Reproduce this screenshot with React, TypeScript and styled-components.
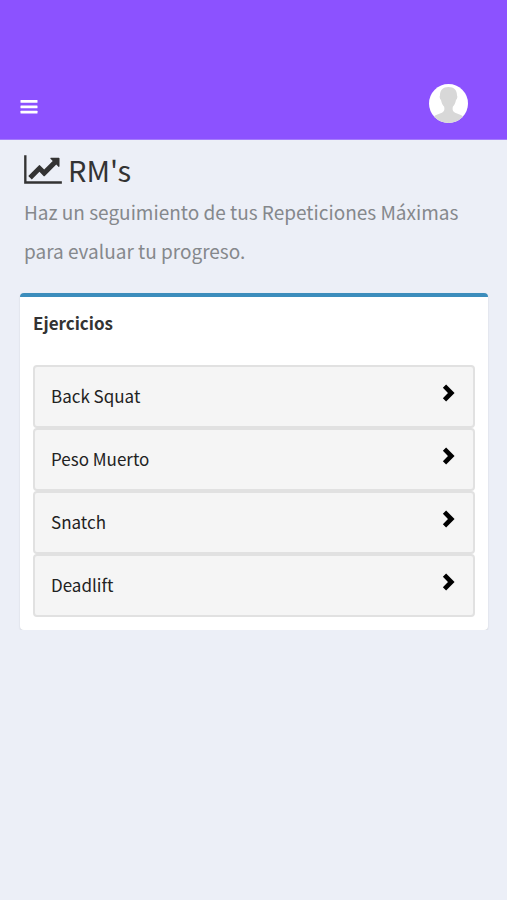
import React from "react";
import styled, { createGlobalStyle } from "styled-components";

const GlobalStyle = createGlobalStyle`
  * { box-sizing: border-box; }
  body {
    margin: 0;
    background: #eceff7;
    color: #333;
    font-family: "Noto Sans CJK SC", "Open Sans", sans-serif;
    font-size: 17px;
  }
`;

const Header = styled.header`
  display: flex;
  align-items: flex-end;
  justify-content: space-between;
  height: 140px;
  padding: 0 39px 16px 20px;
  background: #8c52ff;
  border-bottom: 1px solid #a57cfb;
`;

const IconButton = styled.button`
  display: flex;
  padding: 0;
  border: 0;
  background: none;
  cursor: pointer;
`;

const MenuButton = styled(IconButton)`
  padding-bottom: 9px;
`;

const AvatarButton = styled(IconButton)`
  border-radius: 50%;
`;

const Intro = styled.section`
  padding: 11px 24px 0;
`;

const Title = styled.h1`
  display: flex;
  align-items: center;
  gap: 6px;
  margin: 0;
  font-size: 29px;
  font-weight: 400;
  line-height: 36px;
`;

const Lead = styled.p`
  margin: 5px 0 0;
  color: #85888c;
  font-size: 19px;
  line-height: 39px;
`;

const Panel = styled.section`
  margin: 23px 19px 0 20px;
  padding: 13px 13px 13px;
  background: #fff;
  border-top: 4px solid #3c8dbc;
  border-radius: 4px;
  box-shadow: 0 1px 2px rgba(0, 0, 0, 0.12);
`;

const PanelTitle = styled.h2`
  margin: 0 0 29px;
  font-size: 17px;
  font-weight: 700;
  line-height: 26px;
`;

const List = styled.ul`
  margin: 0;
  padding: 0;
  list-style: none;
`;

const ExerciseButton = styled.button`
  display: flex;
  align-items: center;
  justify-content: space-between;
  width: 100%;
  height: 63px;
  padding: 0 18px 2px 16px;
  background: #f5f5f5;
  border: 2px solid #e1e1e1;
  border-radius: 4px;
  color: #222;
  font: inherit;
  text-align: left;
  cursor: pointer;
`;

const Chevron = styled.svg`
  margin-bottom: 6px;
`;

const exercises = ["Back Squat", "Peso Muerto", "Snatch", "Deadlift"];

export default function App() {
  return (
    <>
      <GlobalStyle />
      <Header>
        <MenuButton type="button" aria-label="Menú">
          <svg width="18" height="15" viewBox="0 0 18 15" fill="#fff" aria-hidden="true">
            <rect x="0.5" y="1" width="17" height="2.8" rx="0.5" />
            <rect x="0.5" y="6.4" width="17" height="2.8" rx="0.5" />
            <rect x="0.5" y="11.8" width="17" height="2.8" rx="0.5" />
          </svg>
        </MenuButton>
        <AvatarButton type="button" aria-label="Perfil">
          <svg width="39" height="39" viewBox="0 0 39 39" aria-hidden="true">
            <defs>
              <clipPath id="avatar-circle">
                <circle cx="19.5" cy="19.5" r="19.5" />
              </clipPath>
            </defs>
            <circle cx="19.5" cy="19.5" r="19.5" fill="#fff" />
            <path
              clipPath="url(#avatar-circle)"
              fill="#d8d8d8"
              d="M19.5 3C14 3 10.8 6.4 11 11.5c-.7.7-.4 3.3 1 4.5.5 3 1.7 5.200 3.200 6.800.4 2.500.2 4.200-1.200 5.200C11 30 7 30 4.500 33L5 39h29l.5-6c-2.500-3-6.500-3-9.500-5-1.400-1-1.600-2.700-1.200-5.200 1.500-1.600 2.700-3.800 3.200-6.800 1.400-1.200 1.700-3.800 1-4.500C28.200 6.400 25 3 19.500 3z"
            />
          </svg>
        </AvatarButton>
      </Header>
      <main>
        <Intro>
          <Title>
            <svg width="38" height="33" viewBox="0 0 2048 1792" fill="#333" aria-hidden="true">
              <path d="M2048 1536v128h-2048v-1536h128v1408h1920zM1920 288v435q0 21-19.500 29.500t-35.500-7.500l-121-121-633 633q-10 10-23 10t-23-10l-233-233-416 416-192-192 585-585q10-10 23-10t23 10l233 233 464-464-121-121q-16-16-7.500-35.500t29.500-19.500h435q14 0 23 9t9 23z" />
            </svg>
            RM's
          </Title>
          <Lead>Haz un seguimiento de tus Repeticiones Máximas para evaluar tu progreso.</Lead>
        </Intro>
        <Panel>
          <PanelTitle>Ejercicios</PanelTitle>
          <List>
            {exercises.map((name) => (
              <li key={name}>
                <ExerciseButton type="button">
                  {name}
                  <Chevron width="13" height="18" viewBox="0 0 13 18" aria-hidden="true">
                    <path d="M2.500 2.200 9.300 9 2.500 15.800" fill="none" stroke="#000" strokeWidth="4.600" />
                  </Chevron>
                </ExerciseButton>
              </li>
            ))}
          </List>
        </Panel>
      </main>
    </>
  );
}
